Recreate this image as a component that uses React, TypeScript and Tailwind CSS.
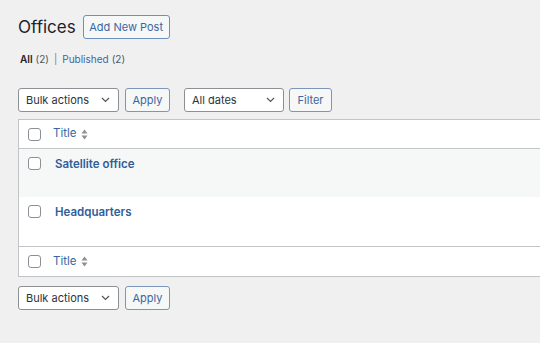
import React from "react";

const font = { fontFamily: "Inter, 'Noto Sans', sans-serif" };

function Chevron() {
  return (
    <svg width="9" height="6" viewBox="0 0 9 6" fill="none">
      <path d="M1 1l3.5 3.5L8 1" stroke="#50575e" strokeWidth="1.2" />
    </svg>
  );
}

function SortIcon() {
  return (
    <svg width="7" height="11" viewBox="0 0 7 11" className="ml-[5px]">
      <path d="M3.5 0.5L6.5 4.5H0.5z" fill="#8c8f94" />
      <path d="M3.5 10.5L0.5 6.5H6.5z" fill="#8c8f94" />
    </svg>
  );
}

function Select({ label, width }: { label: string; width: string }) {
  return (
    <div
      className={`flex h-[24px] items-center justify-between rounded-[3px] border border-[#8c8f94] bg-white pl-[7px] pr-[8px] text-[11px] text-[#2c3338] ${width}`}
    >
      <span>{label}</span>
      <Chevron />
    </div>
  );
}

function Button({ label, width }: { label: string; width: string }) {
  return (
    <div
      className={`flex h-[24px] items-center justify-center rounded-[3px] border border-[#7d95b8] bg-[#f6f7f7] text-[11px] text-[#3b679f] ${width}`}
    >
      {label}
    </div>
  );
}

function Checkbox() {
  return <div className="h-[13px] w-[13px] shrink-0 rounded-[3px] border border-[#8c8f94] bg-white" />;
}

function HeaderRow({ border }: { border: "top" | "bottom" }) {
  return (
    <div
      className={`flex items-center pl-[9px] ${
        border === "bottom" ? "h-[29px] border-b border-[#c3c4c7]" : "h-[30px] border-t border-[#c3c4c7]"
      }`}
    >
      <Checkbox />
      <span className="ml-[12px] text-[11.5px] text-[#3b679f]">Title</span>
      <SortIcon />
    </div>
  );
}

function PostRow({ title, striped }: { title: string; striped?: boolean }) {
  return (
    <div className={`flex h-[48px] items-start pl-[9px] pt-[8px] ${striped ? "bg-[#f6f7f7]" : "h-[49px] bg-white"}`}>
      <Checkbox />
      <span className="ml-[14px] -mt-[1px] text-[11.5px] font-semibold text-[#2f5e98]">{title}</span>
    </div>
  );
}

export default function App() {
  return (
    <div className="h-[343px] w-[540px] overflow-hidden bg-[#f0f0f1] pl-[18px]" style={font}>
      <div className="mt-[15px] flex h-[24px] items-center">
        <h1 className="text-[17px] leading-none text-[#1d2327]">Offices</h1>
        <div className="ml-[7px] flex h-[24px] w-[87px] items-center justify-center rounded-[3px] border border-[#6f8fbf] bg-[#f6f7f7] text-[11px] text-[#3b679f]">
          Add New Post
        </div>
      </div>

      <div className="mt-[13px] flex h-[14px] items-center pl-[2px] text-[10px] text-[#50575e]">
        <span className="font-semibold text-[#1d2327]">All</span>
        <span className="ml-[3px]">(2)</span>
        <span className="mx-[5px] text-[#787c82]">|</span>
        <span className="text-[#3b679f]">Published</span>
        <span className="ml-[3px]">(2)</span>
      </div>

      <div className="mt-[22px] flex items-center">
        <Select label="Bulk actions" width="w-[101px]" />
        <div className="ml-[6px]">
          <Button label="Apply" width="w-[45px]" />
        </div>
        <div className="ml-[14px]">
          <Select label="All dates" width="w-[100px]" />
        </div>
        <div className="ml-[5px]">
          <Button label="Filter" width="w-[43px]" />
        </div>
      </div>

      <div className="mt-[7px] border-y border-l border-[#c3c4c7] bg-white">
        <HeaderRow border="bottom" />
        <PostRow title="Satellite office" striped />
        <PostRow title="Headquarters" />
        <HeaderRow border="top" />
      </div>

      <div className="mt-[9px] flex items-center">
        <Select label="Bulk actions" width="w-[101px]" />
        <div className="ml-[6px]">
          <Button label="Apply" width="w-[45px]" />
        </div>
      </div>
    </div>
  );
}
